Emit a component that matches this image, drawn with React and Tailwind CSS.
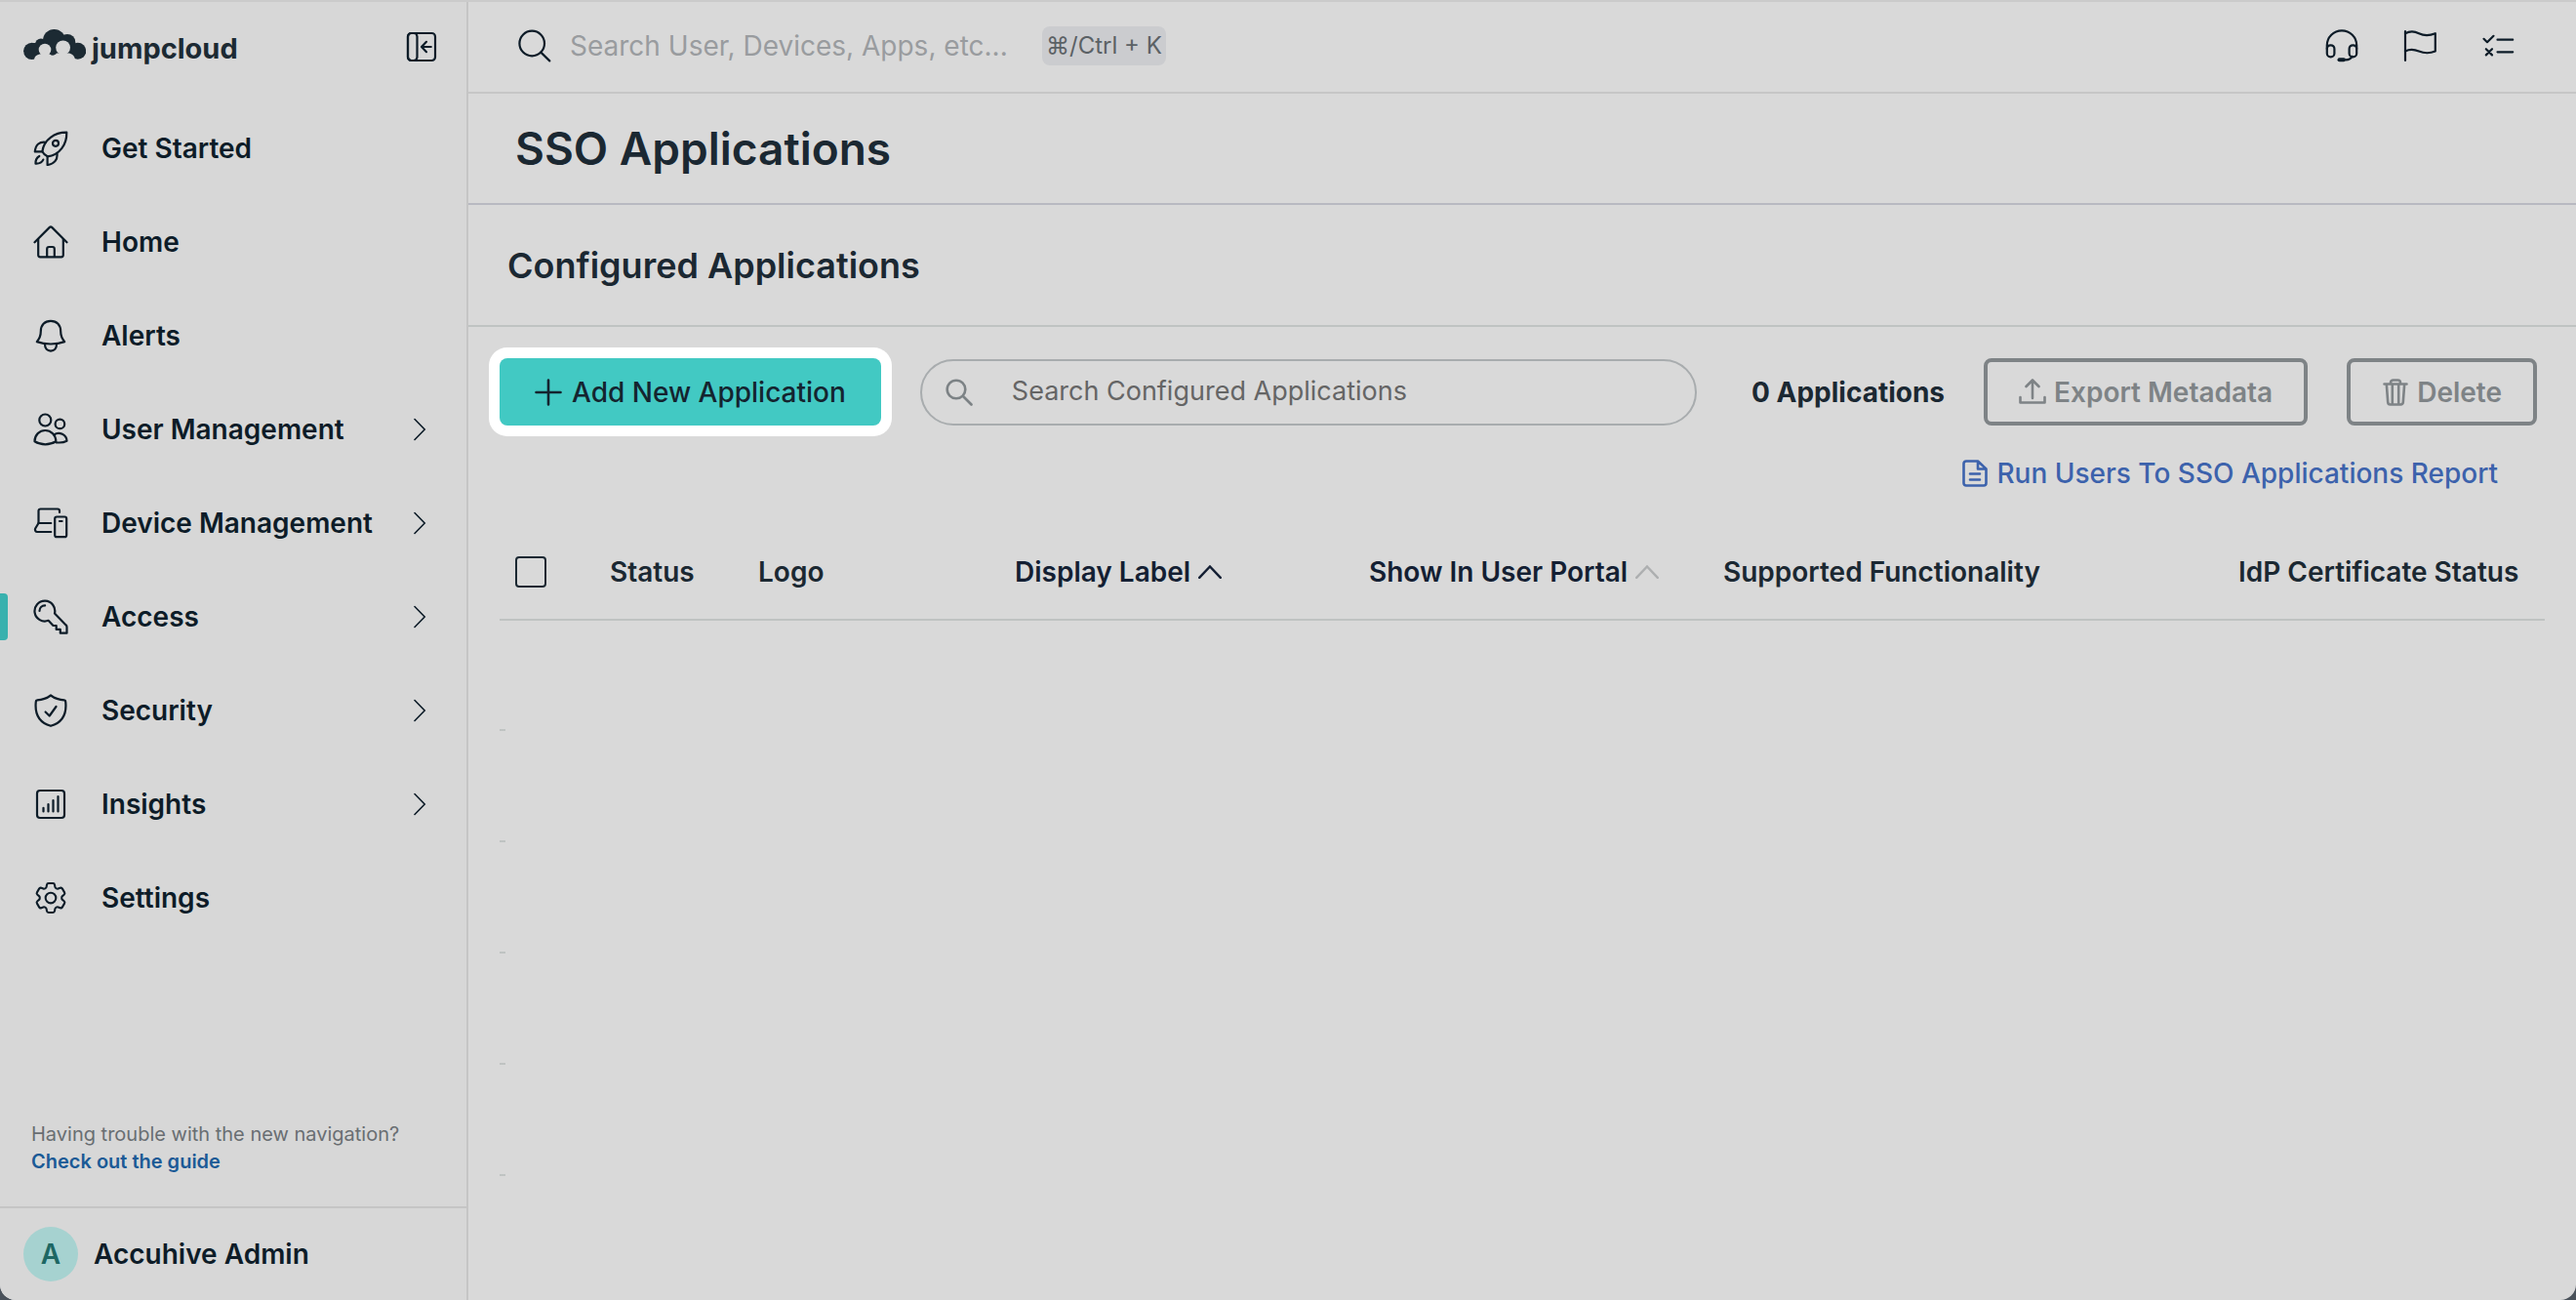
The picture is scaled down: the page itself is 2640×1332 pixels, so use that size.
const icons = {
  rocket: (
    <>
      <path d="M34.3 1.7C22 1.5 11 9 9.3 21.3c1.3 2.4 3 4 5.4 5C27 25 34.6 14 34.3 1.7z" />
      <circle cx="23" cy="12.8" r="3" />
      <path d="M12.8 11.8C6.5 11 2.5 14 1.8 21.4h7.7M24.4 22.8c1 6.4-2.4 11.2-9.8 12.2v-8.8" />
      <path d="M6.3 26c-2.8 1.6-4 4-3.8 7.6 3.8.2 6.4-1 7.8-4" />
    </>
  ),
  home: (
    <>
      <path d="M1.5 18.3L16.6 3.1a2 2 0 0 1 2.8 0L34.5 18.3" />
      <path d="M5.2 15v16.3a2 2 0 0 0 2 2h21.6a2 2 0 0 0 2-2V15" />
      <path d="M14.2 33v-8a2 2 0 0 1 2-2h3.6a2 2 0 0 1 2 2v8" />
    </>
  ),
  bell: (
    <>
      <path d="M18 2.8c-6.3 0-10.2 4.3-10.2 10.7 0 5-1.4 7.6-4 10.6 8.4 3.2 20 3.2 28.4 0-2.6-3-4-5.6-4-10.6C28.2 7.1 24.3 2.8 18 2.8z" />
      <path d="M12 26.8c0 4.3 2.5 6.8 6 6.8s6-2.5 6-6.8" />
    </>
  ),
  users: (
    <>
      <circle cx="12.3" cy="8.5" r="6" />
      <circle cx="27.4" cy="12.4" r="4.8" />
      <path d="M1.5 30.3C1.500 23.500 6.500 19 12.300 19s11 4.500 11 11.300c-6.500 4-15.300 4-21.800 0z" />
      <path d="M21.300 23.500c5.500-3.800 13 0 13.200 6.300-3 1.600-6.900 2-10.900 1.500" />
    </>
  ),
  devices: (
    <>
      <path d="M27 7V5.500a2 2 0 0 0-2-2H7.500a2 2 0 0 0-2 2V18h12.800" />
      <path d="M5.500 18l-3.300 5.500c-.8 1.800.3 3.500 2 3.500h14.100" />
      <rect x="22.200" y="11.500" width="12" height="20.700" rx="2" />
      <path d="M27 16h2.600" />
    </>
  ),
  key: (
    <>
      <path d="M22 14.500L33.600 26.400a3 3 0 0 1 .9 2.200v6.100h-6.700v-3.800h-4.100v-3.900h-3.200l-4.900-5.200a10.400 10.400 0 1 1 6.400-7.300z" />
      <path d="M6.500 12c0-3.300 2.300-5.600 5.600-5.600" />
    </>
  ),
  shield: (
    <>
      <path d="M18 2.500c4 3 8.800 4.600 13.800 4.800a1.500 1.500 0 0 1 1.400 1.500C34.600 21.500 30 30.300 18 33.800 6 30.300 1.400 21.500 2.800 8.800a1.500 1.500 0 0 1 1.400-1.500C9.200 7.100 14 5.500 18 2.500z" />
      <path d="M12.600 19.500l4.100 4 6.800-9.500" />
    </>
  ),
  insights: (
    <>
      <rect x="4" y="4" width="28" height="28" rx="3" />
      <path d="M10.500 21.800v3.700M15.500 18v7.500M20.500 14v11.500M25.500 10v15.500" />
    </>
  ),
  gear: (
    <g transform="translate(-2 -2) scale(1.6667)" strokeWidth="1.25">
      <path d="M9.594 3.940c.09-.542.56-.94 1.110-.94h2.593c.55 0 1.020.398 1.110.94l.213 1.281c.063.374.313.686.645.87.074.04.147.083.22.127.325.196.72.257 1.075.124l1.217-.456a1.125 1.125 0 0 1 1.370.49l1.296 2.247a1.125 1.125 0 0 1-.26 1.431l-1.003.827c-.293.241-.438.613-.43.992a7.723 7.723 0 0 1 0 .255c-.008.378.137.75.43.991l1.004.827c.424.35.534.955.26 1.430l-1.298 2.247a1.125 1.125 0 0 1-1.369.491l-1.217-.456c-.355-.133-.75-.072-1.076.124a6.470 6.470 0 0 1-.22.128c-.331.183-.581.495-.644.869l-.213 1.281c-.09.543-.56.94-1.110.94h-2.594c-.55 0-1.019-.398-1.110-.94l-.213-1.281c-.062-.374-.312-.686-.644-.87a6.520 6.520 0 0 1-.22-.127c-.325-.196-.72-.257-1.076-.124l-1.217.456a1.125 1.125 0 0 1-1.369-.49l-1.297-2.247a1.125 1.125 0 0 1 .26-1.431l1.004-.827c.292-.24.437-.613.43-.991a6.932 6.932 0 0 1 0-.255c.007-.38-.138-.751-.43-.992l-1.004-.827a1.125 1.125 0 0 1-.26-1.430l1.297-2.247a1.125 1.125 0 0 1 1.370-.491l1.216.456c.356.133.751.072 1.076-.124.072-.044.146-.086.22-.128.332-.183.582-.495.644-.869l.214-1.280z" />
      <circle cx="12" cy="12" r="3.200" />
    </g>
  ),
  collapse: (
    <>
      <rect x="4" y="4" width="28" height="28" rx="3.500" />
      <rect x="4" y="4" width="9.500" height="28" rx="3.500" />
      <path d="M27.800 18h-9.600M23 12.800L18 18l5 5.200" />
    </>
  ),
  search: (
    <>
      <circle cx="15.200" cy="15.500" r="12.800" />
      <path d="M24.300 24.600l9 8.800" />
    </>
  ),
  headset: (
    <>
      <path d="M2.800 21v-3.500a15.200 15.200 0 0 1 30.400 0V21" />
      <rect x="2.800" y="17.300" width="7.600" height="12" rx="3.600" />
      <rect x="25.600" y="17.300" width="7.600" height="12" rx="3.600" />
      <path d="M28.500 28.800c-1 2.300-3.200 3.500-6.500 3.500" />
      <path d="M15.500 32.300h4.500" strokeWidth="4" />
    </>
  ),
  flag: (
    <>
      <path d="M3 3v30" />
      <path d="M3 5.200c5-2.600 9.500-2.200 14 0s10 2.800 16.800 0v18.300c-6.800 2.800-12 2-16.800 0s-9-2.600-14 0" />
    </>
  ),
  checklist: (
    <>
      <path d="M3.500 10.800L7 14.200l6.500-6.400M17.500 11.700h15.700M17.500 24.300h15.700" />
      <path d="M5.800 21.200l6.200 6.200M12 21.200l-6.200 6.200" />
    </>
  ),
}

function Icon({ name, className = 'size-9' }) {
  return (
    <svg
      viewBox="0 0 36 36"
      className={`shrink-0 ${className}`}
      fill="none"
      stroke="currentColor"
      strokeWidth="2.2"
      strokeLinecap="round"
      strokeLinejoin="round"
      aria-hidden="true"
    >
      {icons[name]}
    </svg>
  )
}

// Toolbar icons share a smaller 28px grid
function SmallIcon({ children }) {
  return (
    <svg
      viewBox="0 0 28 28"
      className="size-7 shrink-0"
      fill="none"
      stroke="currentColor"
      strokeWidth="2.6"
      strokeLinecap="round"
      strokeLinejoin="round"
      aria-hidden="true"
    >
      {children}
    </svg>
  )
}

function SortArrow({ className }) {
  return (
    <svg
      viewBox="0 0 24 14"
      className={`h-3.5 w-6 ${className}`}
      fill="none"
      stroke="currentColor"
      strokeWidth="2.4"
      strokeLinecap="round"
      aria-hidden="true"
    >
      <path d="M1.200 12.800L12 1.500l10.800 11.300" />
    </svg>
  )
}

function Logo() {
  return (
    <a href="#" className="flex items-end gap-1.5 text-[#1c2a33]">
      <svg viewBox="0 0 64 32" className="mb-1 h-8 w-16" fill="currentColor" aria-hidden="true">
        <circle cx="8.700" cy="22.300" r="8.600" />
        <circle cx="18" cy="15.500" r="6" />
        <circle cx="31.500" cy="11.500" r="11.500" />
        <circle cx="45" cy="13.200" r="8.300" />
        <circle cx="55.700" cy="22.300" r="8.500" />
        <path d="M10 14h42v13H10z" />
        <g className="fill-[#d7d7d7]">
          <circle cx="22" cy="21" r="6.300" />
          <circle cx="40.600" cy="18.800" r="7.400" />
          <path d="M11 31c.5-3.500 2.500-4.800 5.500-5.500h10.500c1 .8 2 1.200 3 1.300 1.500-.2 3-1 4-2.300h13c3.500 1 5.500 3 6 6.500v1H11z" />
        </g>
      </svg>
      <span className="text-[29px] leading-8 font-bold">jumpcloud</span>
    </a>
  )
}

const navItems = [
  { name: 'Get Started', icon: 'rocket' },
  { name: 'Home', icon: 'home' },
  { name: 'Alerts', icon: 'bell' },
  { name: 'User Management', icon: 'users', nested: true },
  { name: 'Device Management', icon: 'devices', nested: true },
  { name: 'Access', icon: 'key', nested: true, active: true },
  { name: 'Security', icon: 'shield', nested: true },
  { name: 'Insights', icon: 'insights', nested: true },
  { name: 'Settings', icon: 'gear' },
]

function Sidebar() {
  return (
    <aside className="flex w-[480px] shrink-0 flex-col border-r-2 border-[#c5c5c5] bg-[#d7d7d7] text-[#0d1c28]">
      <div className="mb-2.5 flex h-[92px] items-center justify-between pr-7 pl-6">
        <Logo />
        <button aria-label="Collapse navigation">
          <Icon name="collapse" />
        </button>
      </div>

      <nav>
        {navItems.map((item) => (
          <a key={item.name} href="#" className="flex h-24 items-center pr-10 text-[28px] font-semibold">
            <span className={`h-12 w-2 rounded-r ${item.active ? 'bg-[#38b1ae]' : ''}`} />
            <Icon name={item.icon} className="mr-[34px] ml-[26px] size-9" />
            {item.name}
            {item.nested && (
              <svg
                viewBox="0 0 14 24"
                className="ml-auto h-6 w-3.5"
                fill="none"
                stroke="currentColor"
                strokeWidth="1.6"
                strokeLinecap="round"
                aria-hidden="true"
              >
                <path d="M1 1.500L11.200 12 1 22.500" />
              </svg>
            )}
          </a>
        ))}
      </nav>

      <div className="mt-auto px-8 pb-8 text-[20px] leading-7">
        <p className="text-[#696e72]">Having trouble with the new navigation?</p>
        <a href="#" className="block font-semibold text-[#1b5a96]">Check out the guide</a>
      </div>
      <button className="flex h-24 items-center gap-4 border-t-2 border-[#c5c5c5] px-6 text-[28px] font-semibold">
        <span className="flex size-14 items-center justify-center rounded-full bg-[#a6d2d0] text-[#1d6763]">A</span>
        Accuhive Admin
      </button>
    </aside>
  )
}

function TopBar() {
  return (
    <header className="flex h-[94px] items-center border-b-2 border-[#c6c6c6] pr-[62px] pb-0.5 pl-[50px] text-[#0d1c28]">
      <label htmlFor="global-search">
        <Icon name="search" />
      </label>
      <input
        id="global-search"
        type="text"
        aria-label="Search"
        placeholder="Search User, Devices, Apps, etc..."
        className="ml-[18px] w-[468px] bg-transparent text-[28px] outline-none placeholder:text-[#999c9f]"
      />
      <kbd className="ml-4 flex h-10 items-center rounded-lg bg-[#cbcccf] px-1 font-[Inter,'DejaVu_Sans',sans-serif] text-[24px] text-[#5b6165]">
        ⌘/Ctrl + K
      </kbd>
      <div className="ml-auto flex gap-11">
        <button aria-label="Support"><Icon name="headset" /></button>
        <button aria-label="Announcements"><Icon name="flag" /></button>
        <button aria-label="Checklist"><Icon name="checklist" /></button>
      </div>
    </header>
  )
}

function Toolbar() {
  return (
    <div className="flex items-center gap-10 pr-10 pl-8 text-[28px] font-semibold">
      <button className="flex h-[69px] items-center gap-2.5 rounded-lg bg-[#42c9c3] px-9 font-medium text-[#14242f] ring-[11px] ring-white">
        <SmallIcon>
          <path d="M14 1.500v25M1.500 14h25" />
        </SmallIcon>
        Add New Application
      </button>
      <div className="flex h-[68px] flex-1 items-center rounded-full border-2 border-[#a8acae] px-6">
        <label htmlFor="app-search" className="text-[#7c8285]">
          <SmallIcon>
            <circle cx="11" cy="11" r="9.300" />
            <path d="M18 18l8.500 8.500" />
          </SmallIcon>
        </label>
        <input
          id="app-search"
          type="text"
          aria-label="Search Configured Applications"
          placeholder="Search Configured Applications"
          className="ml-10 w-full bg-transparent text-[27px] font-normal outline-none placeholder:text-[#656565]"
        />
      </div>
      <span className="ml-4 font-bold text-[#1b2832]">0 Applications</span>
      <button disabled className="flex h-[69px] items-center gap-2 rounded-lg border-4 border-[#7e8386] px-8 text-[#7e8386]">
        <SmallIcon>
          <path d="M14 20V2M7.500 8L14 1.500 20.500 8M1.500 19v5.500h25V19" />
        </SmallIcon>
        Export Metadata
      </button>
      <button disabled className="flex h-[69px] items-center gap-2 rounded-lg border-4 border-[#7e8386] px-8 text-[#7e8386]">
        <SmallIcon>
          <path d="M2.500 5.500h23M9 5.500V4a2.500 2.500 0 0 1 2.500-2.500h5A2.500 2.500 0 0 1 19 4v1.500M4.800 5.500l1.400 18.700a2.500 2.500 0 0 0 2.500 2.300h10.600a2.500 2.500 0 0 0 2.500-2.300l1.400-18.700M10.800 6v20M17.200 6v20" />
        </SmallIcon>
        Delete
      </button>
    </div>
  )
}

const emptyRows = [1, 2, 3, 4, 5]

function ApplicationsTable() {
  return (
    <div className="mt-8 px-8">
      <table className="w-full table-fixed border-collapse text-left text-[28px] text-[#1b2832]">
        <thead>
          <tr className="h-[98px] border-b-2 border-[#bfc3c2] [&>th]:px-4 [&>th]:font-semibold">
            <th className="w-[97px]">
              <input
                type="checkbox"
                aria-label="Select all applications"
                className="block size-8 appearance-none rounded border-2 border-[#1b2832]"
              />
            </th>
            <th className="w-[152px]">Status</th>
            <th className="w-[263px]">Logo</th>
            <th className="w-[363px]">
              <button className="flex items-center gap-2 text-[#141f33]">
                Display Label <SortArrow />
              </button>
            </th>
            <th className="w-[363px]">
              <button className="flex items-center gap-2 text-[#141f33]">
                Show In User Portal <SortArrow className="text-[#adafb0]" />
              </button>
            </th>
            <th>Supported Functionality</th>
            <th className="w-[330px]">IdP Certificate Status</th>
          </tr>
        </thead>
        <tbody>
          {emptyRows.map((row) => (
            <tr key={row} className="h-[114px]">
              <td className="p-0 align-bottom">
                <div className="h-0.5 w-1.5 bg-[#bfc3c2]" />
              </td>
            </tr>
          ))}
        </tbody>
      </table>
    </div>
  )
}

export default function App() {
  return (
    <div className="bg-[#4a525b] font-[Inter,sans-serif]">
      <div className="flex min-h-screen overflow-hidden rounded-b-2xl border-t-2 border-[#cbcbcb] bg-[#d9d9d9]">
        <Sidebar />
        <main className="min-w-0 flex-1">
          <TopBar />
          <div className="flex h-[114px] items-center border-b-2 border-[#b8b9c1] px-12">
            <h1 className="text-[46px] font-semibold text-[#1b2832]">SSO Applications</h1>
          </div>
          <div className="mb-8 flex h-[125px] items-center border-b-2 border-[#bfc3c2] px-10">
            <h2 className="text-[36px] font-semibold text-[#1b2832]">Configured Applications</h2>
          </div>
          <Toolbar />
          <div className="mt-[29px] flex justify-end pr-20">
            <a href="#" className="flex h-10 items-center gap-2 text-[28px] font-medium text-[#3c62ac]">
              <SmallIcon>
                <path d="M2.500 4a2.500 2.500 0 0 1 2.500-2.500h12l8.500 8V24a2.500 2.500 0 0 1-2.500 2.500H5A2.500 2.500 0 0 1 2.500 24zM17 1.500V9.500h8.500M9 14.500h10M9 20.500h10" />
              </SmallIcon>
              Run Users To SSO Applications Report
            </a>
          </div>
          <ApplicationsTable />
        </main>
      </div>
    </div>
  )
}
